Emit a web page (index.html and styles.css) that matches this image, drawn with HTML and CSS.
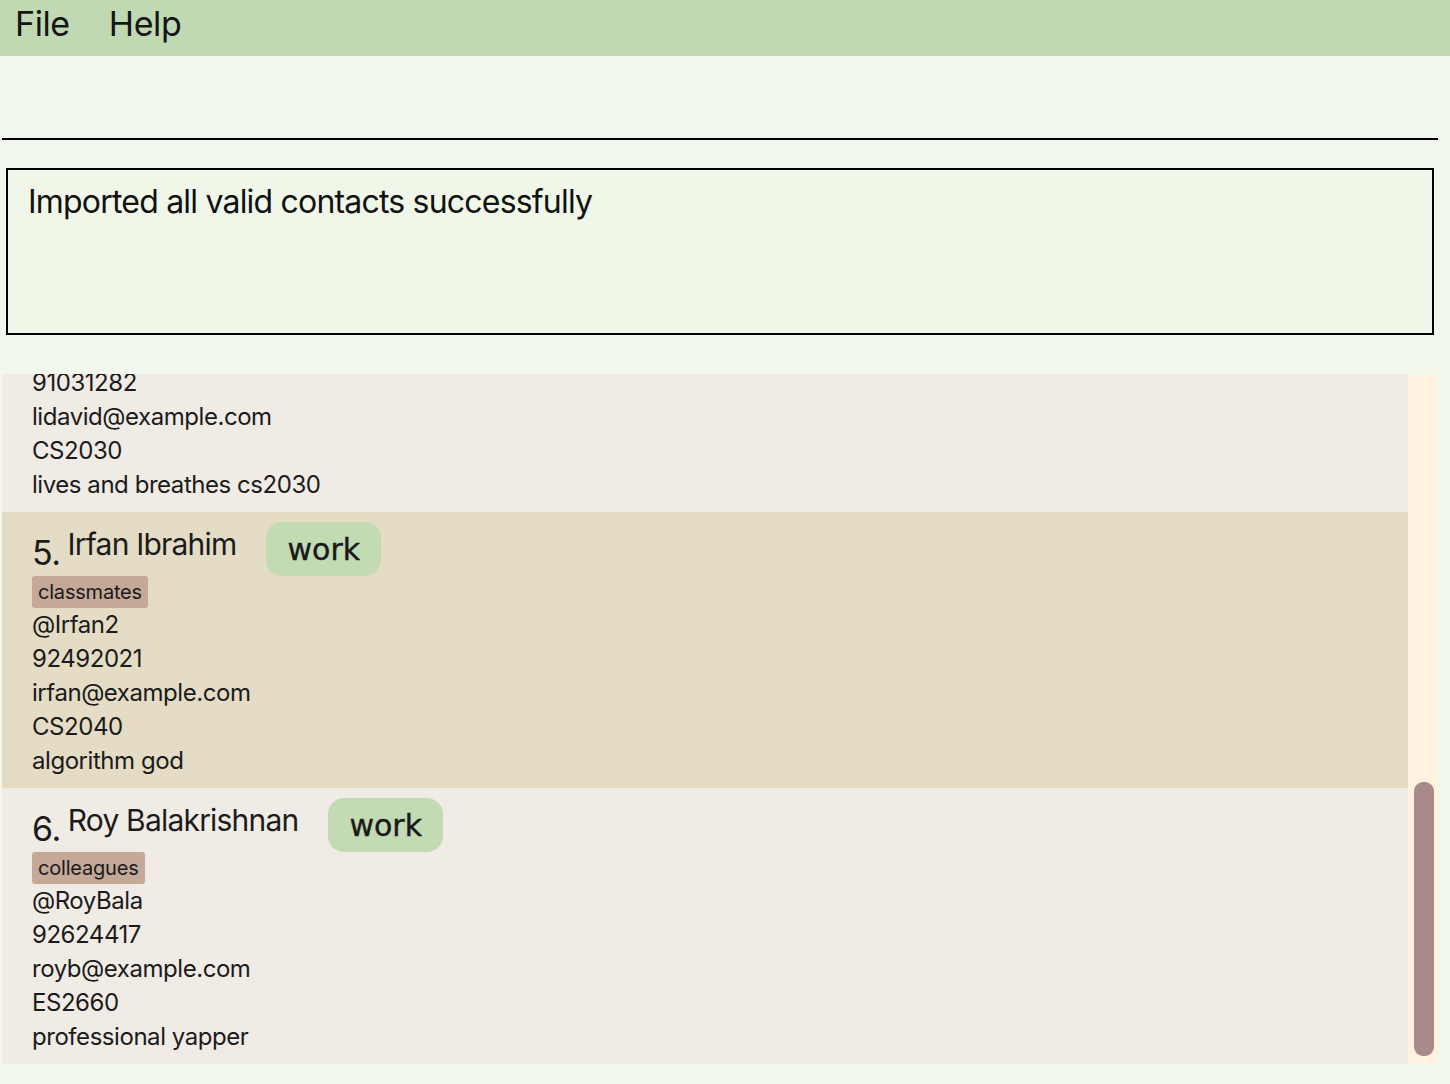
FILE: index.html
```html
<!DOCTYPE html>
<html lang="en">
<head>
<meta charset="utf-8">
<title>Contacts</title>
<link rel="stylesheet" href="styles.css">
</head>
<body>
<div class="app">
  <nav class="menubar">
    <span class="menu-item">File</span>
    <span class="menu-item">Help</span>
  </nav>
  <div class="command"></div>
  <div class="result">Imported all valid contacts successfully</div>
  <div class="list-area">
    <div class="list-viewport">
      <div class="list">
        <div class="cell cell-light cell-partial">
          <div class="line line-first">91031282</div>
          <div class="line">lidavid@example.com</div>
          <div class="line">CS2030</div>
          <div class="line">lives and breathes cs2030</div>
        </div>
        <div class="cell cell-dark">
          <div class="head"><span class="idx">5.</span><span class="name">Irfan Ibrahim</span><span class="pill">work</span></div>
          <div class="tags"><span class="tag">classmates</span></div>
          <div class="line">@Irfan2</div>
          <div class="line">92492021</div>
          <div class="line">irfan@example.com</div>
          <div class="line">CS2040</div>
          <div class="line">algorithm god</div>
        </div>
        <div class="cell cell-light">
          <div class="head"><span class="idx">6.</span><span class="name">Roy Balakrishnan</span><span class="pill">work</span></div>
          <div class="tags"><span class="tag">colleagues</span></div>
          <div class="line">@RoyBala</div>
          <div class="line">92624417</div>
          <div class="line">royb@example.com</div>
          <div class="line">ES2660</div>
          <div class="line">professional yapper</div>
        </div>
      </div>
    </div>
    <div class="scrolltrack"><div class="thumb"></div></div>
  </div>
</div>
</body>
</html>
```
FILE: styles.css
```css
html, body {
  margin: 0;
  padding: 0;
}
body {
  background: #f3f8ee;
  font-family: Inter, "Noto Sans", sans-serif;
  color: #1b1b1b;
  width: 1450px;
  height: 1084px;
  overflow: hidden;
}
.app {
  display: flex;
  flex-direction: column;
}
.menubar {
  height: 56px;
  background: #c0d9b3;
  display: flex;
  align-items: flex-start;
  gap: 39px;
  padding-left: 15px;
  box-sizing: border-box;
}
.menu-item {
  font-size: 34px;
  line-height: 48px;
  color: #151515;
  letter-spacing: -0.4px;
}
.command {
  height: 82px;
  margin-left: 2px;
  width: 1436px;
  border-bottom: 2px solid #000;
}
.result {
  margin: 28px 0 0 6px;
  width: 1428px;
  height: 167px;
  box-sizing: border-box;
  border: 2px solid #000;
  background: #f0f7e8;
  padding: 10px 0 0 20px;
  font-size: 32px;
  line-height: 44px;
  color: #111;
  letter-spacing: -0.8px;
}
.list-area {
  margin: 39px 0 0 2px;
  width: 1436px;
  height: 690px;
  display: flex;
}
.list-viewport {
  width: 1406px;
  height: 690px;
  overflow: hidden;
}
.cell {
  height: 276px;
  box-sizing: border-box;
  padding: 10px 0 10px 30px;
}
.cell-partial {
  height: 138px;
  padding-top: 0;
  padding-bottom: 0;
  overflow: hidden;
}
.line-first {
  margin-top: -8px;
}
.cell-light { background: #f0ebe5; }
.cell-dark { background: #e4dcc5; }
.head {
  height: 54px;
  display: flex;
  align-items: flex-start;
}
.idx {
  font-size: 34px;
  line-height: 34px;
  margin-top: 14px;
  margin-right: 7px;
  letter-spacing: -0.5px;
}
.name {
  font-size: 30px;
  line-height: 34px;
  margin-top: 5px;
  letter-spacing: -0.8px;
}
.pill {
  margin-left: 30px;
  height: 54px;
  padding: 0 21px;
  border-radius: 16px;
  background: #c3dbb3;
  font-family: "DejaVu Sans", sans-serif;
  font-size: 30px;
  line-height: 56px;
  color: #1a1a1a;
  -webkit-text-stroke: 0.4px #1a1a1a;
}
.tags {
  height: 32px;
  display: flex;
}
.tag {
  background: #c4a898;
  border-radius: 3px;
  font-size: 20px;
  line-height: 32px;
  padding: 0 6px;
  color: #1a1a1a;
  letter-spacing: -0.2px;
}
.line {
  font-size: 24px;
  line-height: 34px;
  letter-spacing: -0.45px;
}
.scrolltrack {
  width: 30px;
  height: 690px;
  background: #fff3e0;
  position: relative;
}
.thumb {
  position: absolute;
  left: 6px;
  top: 408px;
  width: 20px;
  height: 274px;
  border-radius: 9px;
  background: #a88a8a;
}
```
